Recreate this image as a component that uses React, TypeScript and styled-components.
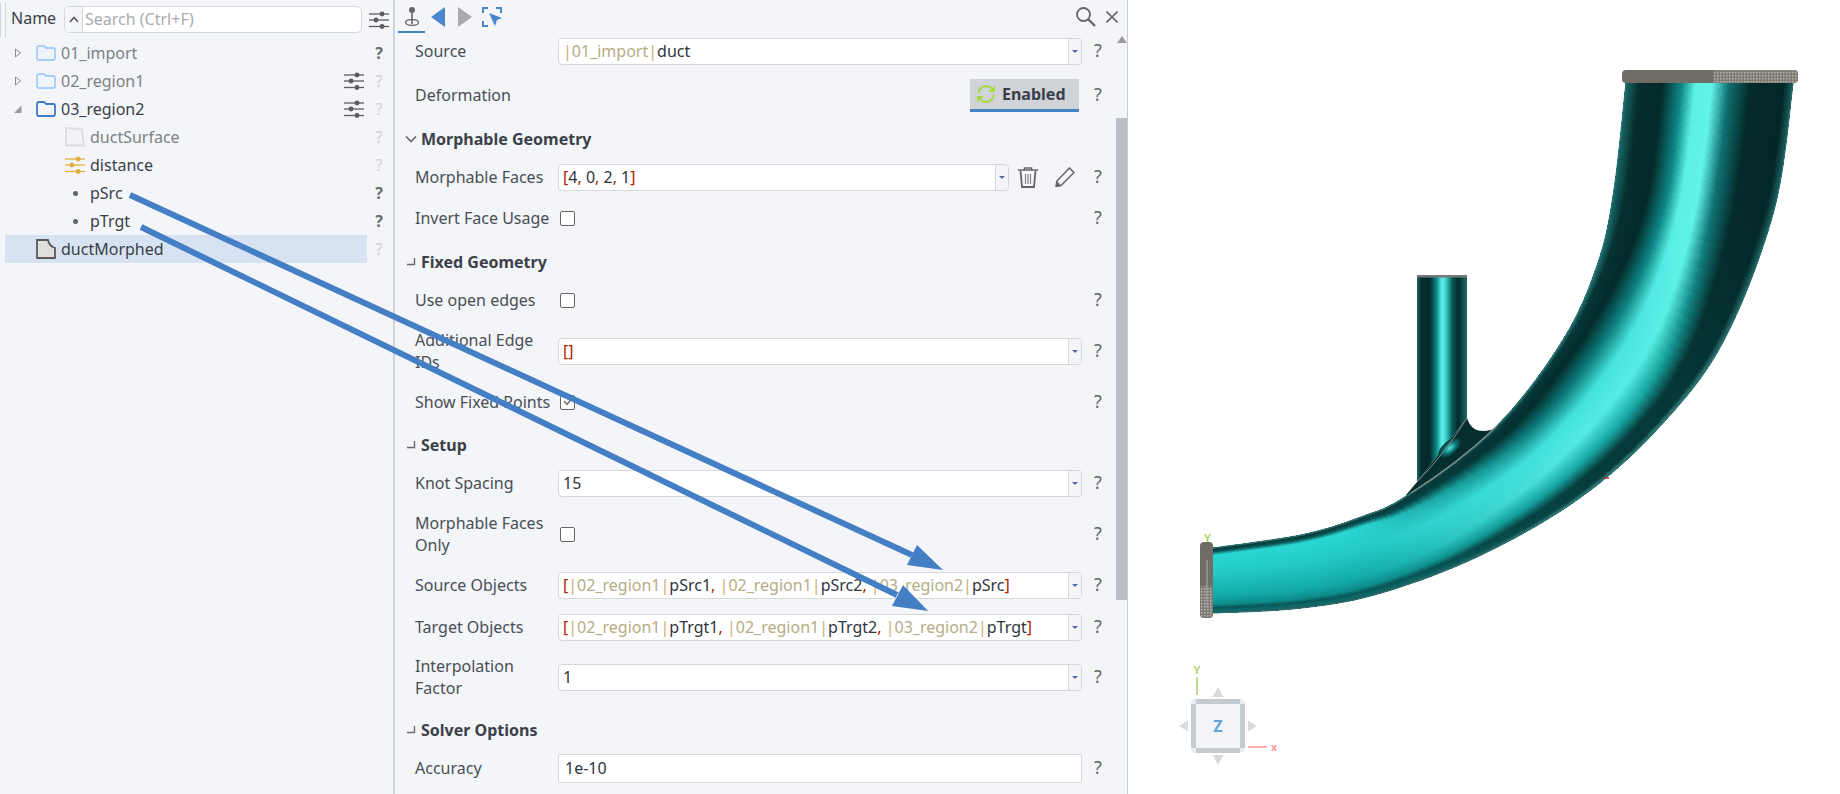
import React, { ReactNode } from 'react';
import styled, { createGlobalStyle } from 'styled-components';

const GlobalStyle = createGlobalStyle`
  html, body {
    margin: 0;
    padding: 0;
    background: #fff;
    overflow: hidden;
  }
  * {
    box-sizing: border-box;
  }
`;

type Tree = {
  name: string;
  depth: number;
  icon: 'folder' | 'folderOpen' | 'sheet' | 'sheetDark' | 'param' | 'point';
  toggle?: 'closed' | 'open';
  muted?: boolean;
  settings?: boolean;
  strongHelp?: boolean;
  selected?: boolean;
};

const treeRows: Tree[] = [
  { name: '01_import', depth: 0, icon: 'folder', toggle: 'closed', muted: true, strongHelp: true },
  { name: '02_region1', depth: 0, icon: 'folder', toggle: 'closed', muted: true, settings: true },
  { name: '03_region2', depth: 0, icon: 'folderOpen', toggle: 'open', settings: true },
  { name: 'ductSurface', depth: 1, icon: 'sheet', muted: true },
  { name: 'distance', depth: 1, icon: 'param' },
  { name: 'pSrc', depth: 1, icon: 'point', strongHelp: true },
  { name: 'pTrgt', depth: 1, icon: 'point', strongHelp: true },
  { name: 'ductMorphed', depth: 0, icon: 'sheetDark', selected: true },
];

function FilterIcon({ color = '#5c5c5c' }: { color?: string }) {
  return (
    <svg width="20" height="20" viewBox="0 0 20 20">
      <g stroke={color} strokeWidth="1.3" fill={color}>
        <line x1="0" y1="4" x2="20" y2="4" />
        <line x1="0" y1="10" x2="20" y2="10" />
        <line x1="0" y1="16.5" x2="20" y2="16.5" />
        <circle cx="13" cy="4" r="1.8" />
        <circle cx="7" cy="10" r="1.8" />
        <circle cx="13" cy="16.5" r="1.8" />
      </g>
    </svg>
  );
}

function FolderIcon({ color, fill }: { color: string; fill: string }) {
  return (
    <svg width="20" height="16" viewBox="0 0 20 16">
      <path
        d="M1 3 Q1 1 3 1 H8 L10 3 H17.5 Q19 3 19 5 V13 Q19 15 17 15 H3 Q1 15 1 13 Z"
        fill={fill}
        stroke={color}
        strokeWidth="1.8"
      />
    </svg>
  );
}

function TreeIcon({ icon }: { icon: Tree['icon'] }) {
  switch (icon) {
    case 'folder':
      return <FolderIcon color="#a9cdf6" fill="#eef4fb" />;
    case 'folderOpen':
      return <FolderIcon color="#3f7cc6" fill="#f3f5f8" />;
    case 'sheet':
      return (
        <svg width="20" height="20" viewBox="0 0 20 20">
          <path d="M1 1 L17 2 Q18 12 19 18.5 H1 Z" fill="#f1f2f4" stroke="#dcdddf" strokeWidth="1.8" />
        </svg>
      );
    case 'sheetDark':
      return (
        <svg width="20" height="20" viewBox="0 0 20 20">
          <path d="M1 1 H12 Q13 7 19 9 V19 H1 Z" fill="#dfdfdf" stroke="#5a5a5a" strokeWidth="1.8" />
        </svg>
      );
    case 'param':
      return <FilterIcon color="#e2ad3e" />;
    default:
      return <PointDot />;
  }
}

function Toggle({ kind }: { kind?: 'closed' | 'open' }) {
  if (kind === 'closed') {
    return (
      <svg width="10" height="10" viewBox="0 0 10 10">
        <path d="M2.5 1 L7.5 5 L2.5 9 Z" fill="none" stroke="#8c8c8c" strokeWidth="1" />
      </svg>
    );
  }
  if (kind === 'open') {
    return (
      <svg width="10" height="10" viewBox="0 0 10 10">
        <path d="M8.5 1.5 V9 H1 Z" fill="#9a9a9a" />
      </svg>
    );
  }
  return null;
}

function PathValue({ value }: { value: string }) {
  const parts = value.split(/(\[|\]|,|\|[^|]*\|)/).filter(Boolean);
  return (
    <>
      {parts.map((part, i) => {
        if (part === '[' || part === ']' || part === ',') return <Bracket key={i}>{part}</Bracket>;
        if (part.startsWith('|')) {
          return (
            <React.Fragment key={i}>
              <Pipe>|</Pipe>
              <PathName>{part.slice(1, -1)}</PathName>
              <Pipe>|</Pipe>
            </React.Fragment>
          );
        }
        return <span key={i}>{part}</span>;
      })}
    </>
  );
}

function CollapseMark({ open }: { open?: boolean }) {
  return open ? (
    <svg width="12" height="8" viewBox="0 0 12 8">
      <path d="M1 1.5 L6 6.5 L11 1.5" fill="none" stroke="#5c5c5c" strokeWidth="1.5" />
    </svg>
  ) : (
    <svg width="9" height="8" viewBox="0 0 9 8">
      <path d="M7.5 0 V6.5 H0" fill="none" stroke="#6a6a6a" strokeWidth="1.4" />
    </svg>
  );
}

function Field({
  label,
  h,
  mt,
  children,
}: {
  label: string;
  h: number;
  mt?: number;
  children: ReactNode;
}) {
  return (
    <FormRow $h={h} $mt={mt}>
      <Label>{label}</Label>
      <Control>{children}</Control>
      <HelpMark>?</HelpMark>
    </FormRow>
  );
}

function SelectInput({ value, h = 27 }: { value: string; h?: number }) {
  return (
    <InputBox $h={h}>
      <InputText>
        <PathValue value={value} />
      </InputText>
      <DropCell>
        <DropArrow />
      </DropCell>
    </InputBox>
  );
}

/* ---- duct drawing ---- */

type Pt = [number, number];
type Stop = [number, string];

const innerEdge: Pt[] = [
  [1212, 548], [1300, 535], [1360, 517], [1407, 495], [1495, 427],
  [1562, 340], [1597, 263], [1613, 190], [1625, 83],
];
const outerEdge: Pt[] = [
  [1212, 613], [1300, 608], [1380, 593], [1480, 555], [1580, 497],
  [1660, 425], [1723, 340], [1773, 210], [1792, 83],
];

const profileLeft: Stop[] = [
  [0, '#4a7a7a'], [0.03, '#063838'], [0.07, '#0a5a5a'], [0.12, '#2ad6d2'], [0.4, '#22cac8'],
  [0.75, '#12aaa8'], [0.88, '#0e8a8a'], [0.93, '#0a5656'], [0.97, '#0b6a6a'], [1, '#2a5a5a'],
];
const profileMid: Stop[] = [
  [0, '#2a7a7a'], [0.03, '#063838'], [0.12, '#042c2c'], [0.26, '#0c7a7a'], [0.42, '#44e2dc'],
  [0.6, '#52ece4'], [0.76, '#18a8a4'], [0.88, '#063a3a'], [0.97, '#063a3a'], [1, '#3a8080'],
];
const profileTop: Stop[] = [
  [0, '#1a6a6a'], [0.08, '#062e2e'], [0.22, '#042a2a'], [0.34, '#0f8a8a'], [0.42, '#5cf0e8'],
  [0.52, '#62f2ea'], [0.62, '#0f7070'], [0.75, '#052a2a'], [0.95, '#042828'], [1, '#1a5a5a'],
];

const rgb = (hex: string) => [1, 3, 5].map((i) => parseInt(hex.slice(i, i + 2), 16));
const mix = (a: number[], b: number[], k: number) => a.map((v, i) => v + (b[i] - v) * k);
const ramp = (v: number, from: number, to: number) => {
  const x = Math.min(Math.max((v - from) / (to - from), 0), 1);
  return x * x * (3 - 2 * x);
};

function sampleProfile(t: number, u: number) {
  const [a, b, k] =
    t < 0.58 ? [profileLeft, profileMid, ramp(t, 0.2, 0.58)] : [profileMid, profileTop, ramp(t, 0.58, 0.92)];
  const stops = a.map((s, i) => ({
    at: s[0] + (b[i][0] - s[0]) * k,
    col: mix(rgb(s[1]), rgb(b[i][1]), k),
  }));
  for (let i = 0; i < stops.length - 1; i++) {
    if (u <= stops[i + 1].at) {
      const f = (u - stops[i].at) / (stops[i + 1].at - stops[i].at);
      const c = mix(stops[i].col, stops[i + 1].col, f);
      return `rgb(${c.map(Math.round).join(',')})`;
    }
  }
  return 'rgb(26,90,90)';
}

function curveAt(points: Pt[], t: number): Pt {
  const n = points.length - 1;
  const s = Math.min(t * n, n - 0.0001);
  const i = Math.floor(s);
  const f = s - i;
  const p0 = points[Math.max(i - 1, 0)];
  const p1 = points[i];
  const p2 = points[i + 1];
  const p3 = points[Math.min(i + 2, n)];
  const calc = (d: 0 | 1) =>
    0.5 *
    (2 * p1[d] +
      (p2[d] - p0[d]) * f +
      (2 * p0[d] - 5 * p1[d] + 4 * p2[d] - p3[d]) * f * f +
      (3 * p1[d] - p0[d] - 3 * p2[d] + p3[d]) * f * f * f);
  return [calc(0), calc(1)];
}

function buildDuct() {
  const cells: { points: string; fill: string }[] = [];
  const along = 72;
  const across = 90;
  for (let a = 0; a < along; a++) {
    const t0 = a / along;
    const t1 = (a + 1) / along;
    const i0 = curveAt(innerEdge, t0);
    const i1 = curveAt(innerEdge, t1);
    const o0 = curveAt(outerEdge, t0);
    const o1 = curveAt(outerEdge, t1);
    for (let c = 0; c < across; c++) {
      const u0 = c / across;
      const u1 = (c + 1) / across;
      const at = (p: Pt, q: Pt, u: number) => `${(p[0] + (q[0] - p[0]) * u).toFixed(1)},${(p[1] + (q[1] - p[1]) * u).toFixed(1)}`;
      cells.push({
        points: [at(i0, o0, u0), at(i1, o1, u0), at(i1, o1, u1), at(i0, o0, u1)].join(' '),
        fill: sampleProfile((t0 + t1) / 2, (u0 + u1) / 2),
      });
    }
  }
  return cells;
}

const ductCells = buildDuct();

const edgeLine = (points: Pt[]) =>
  Array.from({ length: 121 }, (_, i) => curveAt(points, i / 120).map((v) => v.toFixed(1)).join(',')).join(' ');

function ModelView() {
  return (
    <svg width="713" height="794" viewBox="1127 0 713 794">
      <defs>
        <linearGradient id="branchShade" x1="0" x2="1" y1="0" y2="0">
          <stop offset="0" stopColor="#1c6a6a" />
          <stop offset="0.08" stopColor="#052e2e" />
          <stop offset="0.26" stopColor="#042a2a" />
          <stop offset="0.4" stopColor="#0f9090" />
          <stop offset="0.5" stopColor="#62f2ea" />
          <stop offset="0.58" stopColor="#3ad0cc" />
          <stop offset="0.7" stopColor="#0a5a5a" />
          <stop offset="0.82" stopColor="#042a2a" />
          <stop offset="1" stopColor="#1c6a6a" />
        </linearGradient>
        <radialGradient id="filletGlow" cx="0.5" cy="0.5" r="0.5">
          <stop offset="0" stopColor="#58eae4" />
          <stop offset="0.5" stopColor="#0e7c7c" />
          <stop offset="1" stopColor="#042c2c" />
        </radialGradient>
        <pattern id="meshDots" width="3" height="3" patternUnits="userSpaceOnUse">
          <rect width="3" height="3" fill="#7d7b73" />
          <rect width="1.5" height="1.5" fill="#b5b3ac" />
        </pattern>
      </defs>

      <path d="M1416 275 H1466 V418 L1416 482 Z" fill="url(#branchShade)" />
      <path d="M1466 418 Q1470 431 1482 431 Q1490 431 1497 427 L1500 445 L1410 510 L1405 495 L1416 482 Z" fill="#052e2e" />
      <ellipse cx="1449" cy="448" rx="14" ry="7" transform="rotate(-40 1449 448)" fill="url(#filletGlow)" />
      <rect x="1416" y="275" width="50" height="2.5" fill="#77787a" />
      <path d="M1466 418 Q1445 452 1416 482" fill="none" stroke="#8a8a8a" strokeWidth="1" />

      <g shapeRendering="crispEdges">
        {ductCells.map((cell, i) => (
          <polygon key={i} points={cell.points} fill={cell.fill} stroke={cell.fill} strokeWidth="1" />
        ))}
      </g>
      <polyline points={edgeLine(innerEdge)} fill="none" stroke="#2c7272" strokeWidth="1.2" />
      <polyline points={edgeLine(outerEdge)} fill="none" stroke="#2c7272" strokeWidth="1.2" />
      <path d="M1410 493 Q1455 465 1495 427" fill="none" stroke="#808888" strokeWidth="1.4" />

      <rect x="1621" y="70" width="176" height="13" rx="4" fill="#6f6d65" />
      <rect x="1712" y="70" width="85" height="13" rx="4" fill="url(#meshDots)" />
      <rect x="1199" y="542" width="13" height="76" rx="4" fill="#6f6d65" />
      <rect x="1199" y="586" width="13" height="32" rx="4" fill="url(#meshDots)" />
      <line x1="1206" y1="560" x2="1206" y2="608" stroke="#9b9aa0" strokeWidth="1.5" />
      <line x1="1603" y1="478" x2="1608" y2="478" stroke="#c0392b" strokeWidth="1.5" />
      <AxisLabel x="1206.5" y="542" fill="#a2d65a">Y</AxisLabel>

      <line x1="1196" y1="677" x2="1196" y2="695" stroke="#a9d36a" strokeWidth="1.5" />
      <AxisLabel x="1196" y="674" fill="#a9d36a">Y</AxisLabel>
      <line x1="1247" y1="747" x2="1266" y2="747" stroke="#ff8f95" strokeWidth="1.5" />
      <AxisLabel x="1273" y="751" fill="#ff8f95">x</AxisLabel>

      <rect x="1190" y="699" width="54" height="54" rx="5" fill="#e9ebef" />
      <rect x="1195" y="699" width="44" height="54" fill="#c6cbd1" />
      <rect x="1190" y="704" width="54" height="44" fill="#c6cbd1" />
      <rect x="1195" y="704" width="44" height="44" fill="#f3f4f7" />
      <CubeLabel x="1217" y="732">Z</CubeLabel>
      <g fill="#dadada">
        <path d="M1217 687 L1222.5 697 H1211.5 Z" />
        <path d="M1217 765 L1211.5 755 H1222.5 Z" />
        <path d="M1178 726 L1187 720.5 V731.5 Z" />
        <path d="M1256 726 L1247 720.5 V731.5 Z" />
      </g>
    </svg>
  );
}

export default function App() {
  return (
    <Page>
      <GlobalStyle />
      <TreePanel>
        <TreeHeader>
          <Grip />
          <NameTitle>Name</NameTitle>
          <SearchBox>
            <SearchToggle>
              <svg width="10" height="7" viewBox="0 0 10 7">
                <path d="M1 6 L5 1.5 L9 6" fill="none" stroke="#555" strokeWidth="1.5" />
              </svg>
            </SearchToggle>
            <SearchHint>Search (Ctrl+F)</SearchHint>
          </SearchBox>
          <HeaderFilter>
            <FilterIcon />
          </HeaderFilter>
        </TreeHeader>
        {treeRows.map((row) => (
          <TreeRow key={row.name}>
            <TreeBody $selected={row.selected}>
              <ToggleSlot>
                <Toggle kind={row.toggle} />
              </ToggleSlot>
              <IconSlot $depth={row.depth}>
                <TreeIcon icon={row.icon} />
              </IconSlot>
              <TreeName $muted={row.muted}>{row.name}</TreeName>
              {row.settings && <FilterIcon />}
            </TreeBody>
            <TreeHelp $strong={row.strongHelp}>?</TreeHelp>
          </TreeRow>
        ))}
      </TreePanel>

      <PropertyPanel>
        <Toolbar>
          <PinTab>
            <svg width="18" height="22" viewBox="0 0 18 22">
              <circle cx="9" cy="4" r="3" fill="#666" />
              <line x1="9" y1="6" x2="9" y2="18" stroke="#666" strokeWidth="1.6" />
              <ellipse cx="9" cy="16.5" rx="6.5" ry="2.8" fill="none" stroke="#666" strokeWidth="1.2" />
            </svg>
          </PinTab>
          <NavArrow $left viewBox="0 0 14 20">
            <path d="M14 0 V20 L0 10 Z" fill="#4a86cc" />
          </NavArrow>
          <NavArrow viewBox="0 0 14 20">
            <path d="M0 0 V20 L14 10 Z" fill="#aaaaaa" />
          </NavArrow>
          <SelectIcon viewBox="0 0 20 20">
            <path
              d="M1 6 V1 H6 M14 1 H19 V6 M1 14 V19 H6"
              fill="none"
              stroke="#4a86cc"
              strokeWidth="2"
            />
            <path d="M7 6 L20 11 L15 13 L13 19 Z" fill="#4a86cc" />
          </SelectIcon>
          <ToolbarSpacer />
          <svg width="21" height="21" viewBox="0 0 21 21">
            <circle cx="8.5" cy="8.5" r="6.5" fill="none" stroke="#666" strokeWidth="1.8" />
            <line x1="13" y1="13" x2="20" y2="20" stroke="#666" strokeWidth="2.4" />
          </svg>
          <CloseIcon viewBox="0 0 12 12">
            <path d="M0.5 0.5 L11.5 11.5 M11.5 0.5 L0.5 11.5" stroke="#666" strokeWidth="1.6" />
          </CloseIcon>
        </Toolbar>
        <PanelBody>
          <Form>
            <Field label="Source" h={36}>
              <SelectInput value="|01_import|duct" />
            </Field>
            <Field label="Deformation" h={52}>
              <ToggleButton>
                <svg width="20" height="20" viewBox="0 0 20 20">
                  <path d="M2.5 9 A7.5 7.5 0 0 1 15.5 4.5" fill="none" stroke="#a4db3a" strokeWidth="2" />
                  <path d="M19 1.5 V8 H12.5 Z" fill="#a4db3a" />
                  <path d="M17.5 11 A7.5 7.5 0 0 1 4.5 15.5" fill="none" stroke="#a4db3a" strokeWidth="2" />
                  <path d="M1 18.5 V12 H7.5 Z" fill="#a4db3a" />
                </svg>
                Enabled
              </ToggleButton>
            </Field>
            <Heading $h={36}>
              <MarkSlot>
                <CollapseMark open />
              </MarkSlot>
              Morphable Geometry
            </Heading>
            <Field label="Morphable Faces" h={40}>
              <InputBox $h={27} $w={451}>
                <InputText>
                  <PathValue value="[4, 0, 2, 1]" />
                </InputText>
                <DropCell>
                  <DropArrow />
                </DropCell>
              </InputBox>
              <TrashIcon viewBox="0 0 20 21">
                <path d="M0 3 H20 M6.5 3 V1 H13.5 V3" fill="none" stroke="#666" strokeWidth="1.6" />
                <path d="M2.5 4 L4 20 H16 L17.5 4" fill="none" stroke="#666" strokeWidth="1.8" />
                <path d="M7.5 7 V17 M10 7 V17 M12.5 7 V17" stroke="#888" strokeWidth="1.2" />
              </TrashIcon>
              <PencilIcon viewBox="0 0 20 20">
                <path d="M14.5 1 L19 5.5 L6 18.5 L1 19.5 L1.8 14 Z" fill="none" stroke="#666" strokeWidth="1.5" />
                <path d="M1.8 14 L1 19.5 L6 18.5 Z" fill="#666" />
              </PencilIcon>
            </Field>
            <Field label="Invert Face Usage" h={42}>
              <Checkbox />
            </Field>
            <Heading $h={46}>
              <MarkSlot>
                <CollapseMark />
              </MarkSlot>
              Fixed Geometry
            </Heading>
            <Field label="Use open edges" h={30}>
              <Checkbox />
            </Field>
            <Field label="Additional Edge IDs" h={72}>
              <SelectInput value="[]" />
            </Field>
            <Field label="Show Fixed Points" h={30}>
              <Checkbox>
                <svg width="11" height="9" viewBox="0 0 11 9">
                  <path d="M2 3 L5 6.5 L9 1.5" fill="none" stroke="#666" strokeWidth="1.3" />
                </svg>
              </Checkbox>
            </Field>
            <Heading $h={30} $mt={13}>
              <MarkSlot>
                <CollapseMark />
              </MarkSlot>
              Setup
            </Heading>
            <Field label="Knot Spacing" h={46}>
              <SelectInput value="15" />
            </Field>
            <Field label="Morphable Faces Only" h={56}>
              <Checkbox />
            </Field>
            <Field label="Source Objects" h={46}>
              <SelectInput value="[|02_region1|pSrc1, |02_region1|pSrc2, |03_region2|pSrc]" />
            </Field>
            <Field label="Target Objects" h={38}>
              <SelectInput value="[|02_region1|pTrgt1, |02_region1|pTrgt2, |03_region2|pTrgt]" />
            </Field>
            <Field label="Interpolation Factor" h={62}>
              <SelectInput value="1" />
            </Field>
            <Heading $h={44}>
              <MarkSlot>
                <CollapseMark />
              </MarkSlot>
              Solver Options
            </Heading>
            <Field label="Accuracy" h={32}>
              <PlainInput>1e-10</PlainInput>
            </Field>
          </Form>
          <ScrollTrack>
            <ScrollUp />
            <ScrollThumb />
          </ScrollTrack>
        </PanelBody>
      </PropertyPanel>

      <Canvas>
        <ModelView />
      </Canvas>

      <ArrowLayer width="1840" height="794" viewBox="0 0 1840 794">
        <g stroke="#447fc5" strokeWidth="6" fill="#447fc5">
          <line x1="130" y1="195" x2="912" y2="555" />
          <line x1="141" y1="227" x2="897" y2="595" />
        </g>
        <g fill="#447fc5">
          <polygon points="943,570 917,545 907,565" />
          <polygon points="928,611 903,585 892,606" />
        </g>
      </ArrowLayer>
    </Page>
  );
}

const Page = styled.div`
  position: relative;
  display: flex;
  width: 1840px;
  height: 794px;
  overflow: hidden;
  font-family: 'Noto Sans', 'Open Sans', sans-serif;
  font-size: 16px;
  color: #3a3f47;
  background: #fff;
`;

const TreePanel = styled.div`
  width: 393px;
  flex: none;
  background: #f3f5f8;
`;

const TreeHeader = styled.div`
  display: flex;
  align-items: center;
  height: 39px;
  padding-bottom: 5px;
`;

const Grip = styled.div`
  width: 6px;
  height: 34px;
  margin-top: 5px;
  border-left: 1px solid #d0d3d7;
  border-right: 1px solid #d0d3d7;
`;

const NameTitle = styled.div`
  width: 58px;
  margin-top: 2px;
  padding-left: 5px;
`;

const SearchBox = styled.div`
  display: flex;
  width: 298px;
  height: 27px;
  margin-top: 5px;
  background: #fff;
  border: 1px solid #d5d8dc;
  border-radius: 5px;
  overflow: hidden;
`;

const SearchToggle = styled.div`
  display: flex;
  align-items: center;
  justify-content: center;
  width: 18px;
  flex: none;
  background: #f3f5f8;
  border-right: 1px solid #d5d8dc;
`;

const SearchHint = styled.div`
  padding-left: 2px;
  line-height: 25px;
  color: #a9abae;
`;

const HeaderFilter = styled.div`
  display: flex;
  margin: 5px 0 0 7px;
`;

const TreeRow = styled.div`
  display: flex;
  height: 28px;
  padding-left: 5px;
`;

const TreeBody = styled.div<{ $selected?: boolean }>`
  display: flex;
  align-items: center;
  width: 362px;
  padding: 0 3px 0 8px;
  background: ${(p) => (p.$selected ? '#d7e3f2' : 'transparent')};
`;

const ToggleSlot = styled.div`
  display: flex;
  width: 10px;
  flex: none;
  margin-right: 13px;
`;

const IconSlot = styled.div<{ $depth: number }>`
  display: flex;
  align-items: center;
  justify-content: center;
  width: 20px;
  flex: none;
  margin-left: ${(p) => p.$depth * 29}px;
  margin-right: 5px;
`;

const PointDot = styled.div`
  width: 5px;
  height: 5px;
  border-radius: 50%;
  background: #5f6368;
`;

const TreeName = styled.div<{ $muted?: boolean }>`
  flex: 1;
  color: ${(p) => (p.$muted ? '#7f8184' : '#3a3f47')};
`;

const TreeHelp = styled.div<{ $strong?: boolean }>`
  display: flex;
  align-items: center;
  justify-content: center;
  width: 24px;
  font-weight: ${(p) => (p.$strong ? 700 : 400)};
  color: ${(p) => (p.$strong ? '#6c6c6c' : '#cfd0d2')};
`;

const PropertyPanel = styled.div`
  display: flex;
  flex-direction: column;
  width: 735px;
  flex: none;
  background: #f3f5f8;
  border-left: 2px solid #cfd2d6;
  border-right: 1px solid #c8ccd2;
`;

const Toolbar = styled.div`
  display: flex;
  align-items: center;
  height: 33px;
  padding: 0 9px 0 3px;
`;

const PinTab = styled.div`
  display: flex;
  justify-content: center;
  width: 27px;
  height: 33px;
  padding-top: 6px;
  border-bottom: 2px solid #4482c8;
`;

const NavArrow = styled.svg<{ $left?: boolean }>`
  width: 14px;
  height: 20px;
  margin-left: ${(p) => (p.$left ? 6 : 13)}px;
`;

const SelectIcon = styled.svg`
  width: 20px;
  height: 20px;
  margin-left: 10px;
`;

const ToolbarSpacer = styled.div`
  flex: 1;
`;

const CloseIcon = styled.svg`
  width: 12px;
  height: 12px;
  margin-left: 10px;
`;

const PanelBody = styled.div`
  display: flex;
  flex: 1;
  min-height: 0;
`;

const Form = styled.div`
  flex: 1;
  padding-left: 20px;
`;

const FormRow = styled.div<{ $h: number; $mt?: number }>`
  display: grid;
  grid-template-columns: 143px 524px 32px;
  align-items: center;
  height: ${(p) => p.$h}px;
  margin-top: ${(p) => p.$mt ?? 0}px;
`;

const Label = styled.div`
  line-height: 22px;
  color: #4a4e55;
  padding-right: 2px;
`;

const Control = styled.div`
  display: flex;
  align-items: center;
  min-width: 0;
`;

const HelpMark = styled.div`
  text-align: center;
  font-size: 18px;
  color: #666;
  margin-top: -3px;
`;

const InputBox = styled.div<{ $h: number; $w?: number }>`
  display: flex;
  width: ${(p) => (p.$w ? `${p.$w}px` : '100%')};
  height: ${(p) => p.$h}px;
  flex: none;
  background: #fff;
  border: 1px solid #d5d7da;
  border-radius: 4px;
  overflow: hidden;
`;

const InputText = styled.div`
  flex: 1;
  padding-left: 4px;
  line-height: 24px;
  white-space: nowrap;
  color: #30353d;
`;

const PlainInput = styled.div`
  width: 100%;
  height: 29px;
  padding-left: 6px;
  line-height: 27px;
  color: #30353d;
  background: #fff;
  border: 1px solid #d5d7da;
  border-radius: 2px;
`;

const DropCell = styled.div`
  display: flex;
  align-items: center;
  justify-content: center;
  width: 13px;
  flex: none;
  background: #f3f5f8;
  border-left: 1px solid #d5d7da;
`;

const DropArrow = styled.div`
  width: 0;
  height: 0;
  border-left: 3px solid transparent;
  border-right: 3px solid transparent;
  border-top: 3px solid #5566aa;
`;

const Bracket = styled.span`
  color: #b22000;
`;

const Pipe = styled.span`
  color: #c9ae78;
`;

const PathName = styled.span`
  color: #b4ad86;
`;

const ToggleButton = styled.div`
  display: flex;
  align-items: center;
  gap: 6px;
  width: 109px;
  height: 33px;
  margin-left: auto;
  margin-right: 3px;
  padding-left: 6px;
  font-weight: 700;
  color: #3a3f47;
  background: #d0d3d8;
  border-bottom: 3px solid #4482c8;
`;

const TrashIcon = styled.svg`
  width: 20px;
  height: 21px;
  flex: none;
  margin-left: 9px;
`;

const PencilIcon = styled.svg`
  width: 20px;
  height: 20px;
  flex: none;
  margin-left: 17px;
`;

const Checkbox = styled.div`
  display: flex;
  align-items: center;
  justify-content: center;
  width: 15px;
  height: 15px;
  margin-left: 2px;
  background: #fff;
  border: 1.5px solid #666;
  border-radius: 2px;
`;

const Heading = styled.div<{ $h: number; $mt?: number }>`
  display: flex;
  align-items: center;
  height: ${(p) => p.$h}px;
  margin-top: ${(p) => p.$mt ?? 0}px;
  margin-left: -14px;
  font-weight: 700;
  color: #3c4048;
`;

const MarkSlot = styled.div`
  display: flex;
  justify-content: center;
  width: 20px;
`;

const ScrollTrack = styled.div`
  position: relative;
  width: 11px;
  flex: none;
`;

const ScrollUp = styled.div`
  position: absolute;
  top: 3px;
  left: 1px;
  width: 0;
  height: 0;
  border-left: 5px solid transparent;
  border-right: 5px solid transparent;
  border-bottom: 7px solid #9a9a9a;
`;

const ScrollThumb = styled.div`
  width: 11px;
  height: 482px;
  margin-top: 85px;
  background: #b9bdc5;
`;

const Canvas = styled.div`
  flex: 1;
  background: #fff;
`;

const AxisLabel = styled.text`
  font-family: 'Liberation Sans', sans-serif;
  font-size: 11px;
  font-weight: 700;
  text-anchor: middle;
`;

const CubeLabel = styled.text`
  font-family: 'Open Sans', sans-serif;
  font-size: 16px;
  font-weight: 700;
  text-anchor: middle;
  fill: #62a6da;
`;

const ArrowLayer = styled.svg`
  position: absolute;
  top: 0;
  left: 0;
  pointer-events: none;
`;
